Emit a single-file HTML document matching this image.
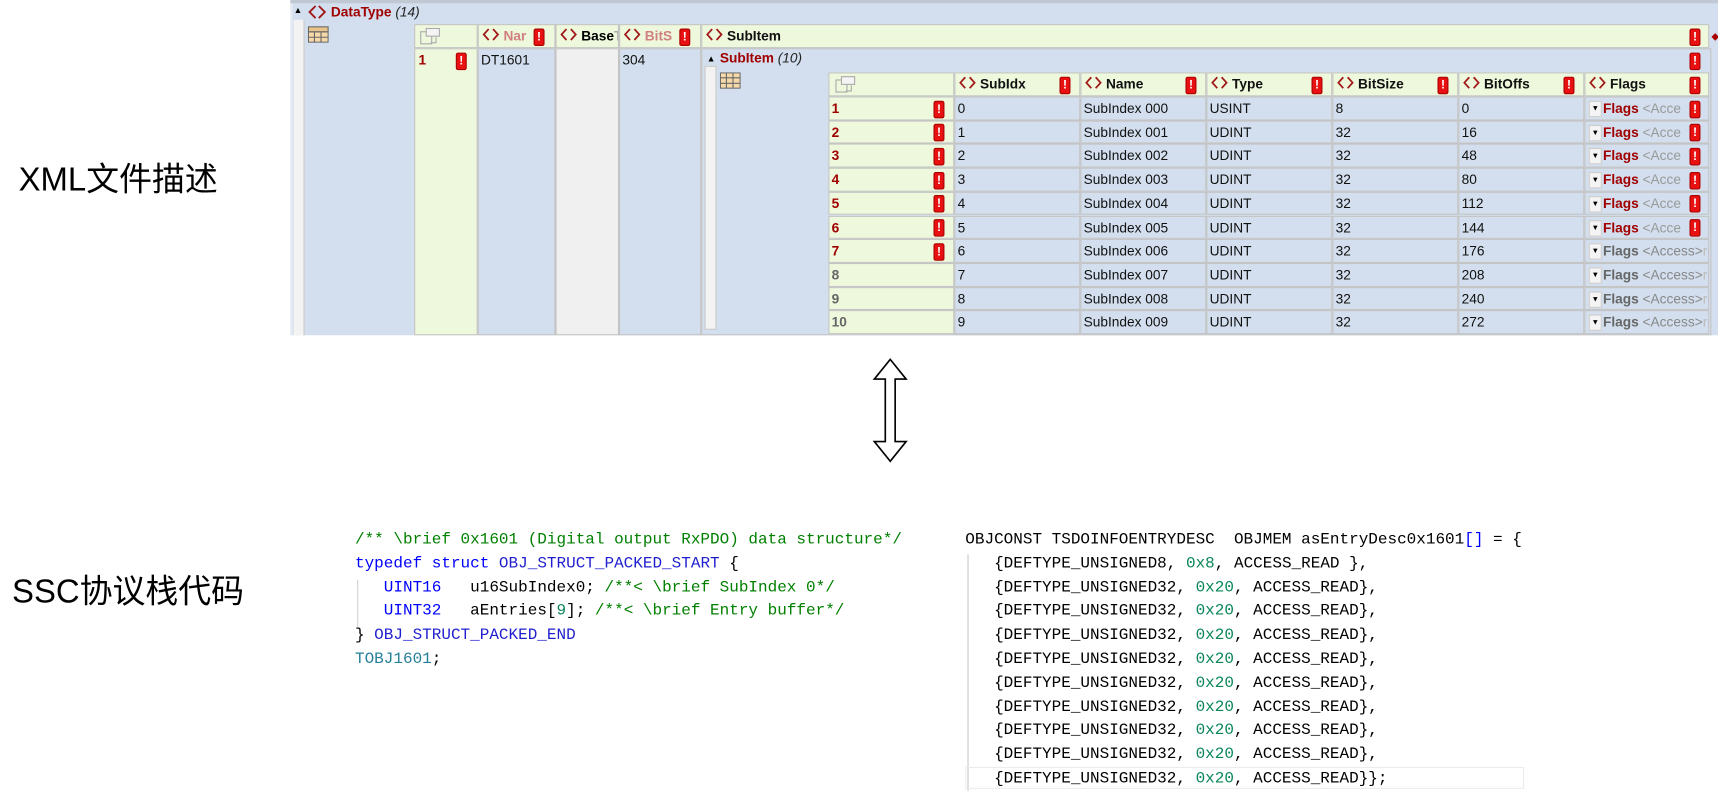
<!DOCTYPE html>
<html><head><meta charset="utf-8">
<style>
html,body{margin:0;padding:0;background:#fff;width:1718px;height:793px;overflow:hidden}
#w{position:absolute;left:0;top:0;width:1568px;height:724px;transform:scale(1.09566);transform-origin:0 0;font-family:"Liberation Sans",sans-serif}
.a{position:absolute}
.hdr{color:#a00000;font-weight:bold;font-size:12.5px}
.ex{display:inline-block;width:8px;height:14px;background:#e81010;border:1px solid #a00;border-radius:2px;color:#fff;font-weight:bold;font-size:11px;line-height:14px;text-align:center;position:absolute}
.cell{position:absolute;box-sizing:border-box;font-size:12.5px;line-height:21px;padding-left:2px;color:#111;white-space:nowrap;overflow:hidden}
.g{background:#eef8dc}.b{background:#d3dfee}.gr{background:#f0f0f0}
.lbl{font-size:30px;color:#000;font-family:"Liberation Sans","Noto Sans CJK SC",sans-serif}
.code{font-family:"Liberation Mono",monospace;font-size:14.6px;line-height:21.8px;white-space:pre;color:#000}
.cm{color:#008000}.kw{color:#0000ff}.ty{color:#267f99}.nu{color:#098658}.mc{color:#1f1fcf}
.dd{position:absolute;width:10px;height:13px;background:#f4f4f4;border:1px solid #ccc;font-size:7px;line-height:13px;text-align:center;color:#000}
.ch{vertical-align:-1px}
</style></head><body><div id="w">
<div class="a lbl" style="left:17px;top:139px">XML文件描述</div>
<div class="a lbl" style="left:11px;top:515px">SSC协议栈代码</div>

<div class="a" style="left:265px;top:0;width:1303px;height:306px;background:#d3dfee;border-left:2px solid #e6ebf2"></div>
<div class="a" style="left:265px;top:0;width:1303px;height:3px;background:#c0c8d4"></div>
<div class="a" style="left:268px;top:18px;width:9px;height:288px;background:#f3f3f3;border-right:1px solid #c8c8c8"></div>
<div class="a" style="left:268px;top:5px;font-size:8px">▲</div>
<svg class="a" style="left:281px;top:4px" width="17" height="14"><path d="M7 1.5L1.5 7L7 12.5M10 1.5L15.5 7L10 12.5" stroke="#a01818" stroke-width="1.7" fill="none"/></svg>
<div class="a hdr" style="left:302px;top:4px;font-size:12.5px">DataType <i style="font-weight:normal;color:#222">(14)</i></div>
<svg class="a" style="left:281px;top:24px" width="19" height="15"><rect x="0.5" y="0.5" width="18" height="14" fill="#f6d9a8" stroke="#666"/><path d="M0 5H19M0 10H19M6 0V15M12 0V15" stroke="#666"/><rect x="0.5" y="0.5" width="18" height="4.5" fill="#e8c48a" stroke="#666"/></svg>

<div class="cell g" style="left:378px;top:22px;width:58px;height:22px;border:1px solid #c4c4c4"></div>
<svg class="a" style="left:383px;top:25px" width="20" height="17"><rect x="1" y="4" width="10" height="11" fill="none" stroke="#aaa"/><rect x="6" y="1" width="12" height="7" fill="#f4f4f4" stroke="#aaa"/><path d="M15 9v5h-5" stroke="#aaa" fill="none"/></svg>
<div class="cell g hdr" style="left:436px;top:22px;width:71px;height:22px;border:1px solid #c4c4c4;padding-left:3px"><svg class="ch" width="16" height="13"><path d="M6 1.5L1.5 6.5L6 11.5M10 1.5L14.5 6.5L10 11.5" stroke="#a01818" stroke-width="1.6" fill="none"/></svg> <span style="color:#d08080">Nar</span><span class="ex" style="left:50px;top:3px">!</span></div>
<div class="cell g hdr" style="left:507px;top:22px;width:58px;height:22px;border:1px solid #c4c4c4;padding-left:3px;color:#000"><svg class="ch" width="16" height="13"><path d="M6 1.5L1.5 6.5L6 11.5M10 1.5L14.5 6.5L10 11.5" stroke="#a01818" stroke-width="1.6" fill="none"/></svg> Base<span style="color:#aaa">T</span></div>
<div class="cell g hdr" style="left:565px;top:22px;width:75px;height:22px;border:1px solid #c4c4c4;padding-left:3px"><svg class="ch" width="16" height="13"><path d="M6 1.5L1.5 6.5L6 11.5M10 1.5L14.5 6.5L10 11.5" stroke="#a01818" stroke-width="1.6" fill="none"/></svg> <span style="color:#d08080">BitS</span><span class="ex" style="left:54px;top:3px">!</span></div>
<div class="cell g hdr" style="left:640px;top:22px;width:920px;height:22px;border:1px solid #c4c4c4;padding-left:3px"><svg class="ch" width="16" height="13"><path d="M6 1.5L1.5 6.5L6 11.5M10 1.5L14.5 6.5L10 11.5" stroke="#a01818" stroke-width="1.6" fill="none"/></svg> SubItem<span class="ex" style="left:901px;top:3px">!</span></div>
<div class="a" style="left:1562px;top:28px;font-size:9px;color:#a00">◆</div>

<div class="cell g" style="left:378px;top:44px;width:58px;height:262px;border:1px solid #c4c4c4;color:#a00000;font-weight:bold;padding-left:3px">1<span class="ex" style="left:37px;top:3px">!</span></div>
<div class="cell b" style="left:436px;top:44px;width:71px;height:262px;border:1px solid #c4c4c4">DT1601</div>
<div class="cell gr" style="left:507px;top:44px;width:58px;height:262px;border:1px solid #c4c4c4"></div>
<div class="cell b" style="left:565px;top:44px;width:75px;height:262px;border:1px solid #c4c4c4">304</div>
<div class="cell b" style="left:640px;top:44px;width:922px;height:262px;border:1px solid #c4c4c4"></div>
<span class="ex" style="left:1542px;top:48px">!</span>
<div class="a" style="left:643px;top:60px;width:9px;height:239px;background:#f3f3f3;border:1px solid #c8c8c8"></div>
<div class="a" style="left:645px;top:49px;font-size:8px">▲</div>
<div class="a hdr" style="left:657px;top:46px">SubItem <i style="font-weight:normal;color:#222">(10)</i></div>
<svg class="a" style="left:657px;top:66px" width="19" height="15"><rect x="0.5" y="0.5" width="18" height="14" fill="#f6d9a8" stroke="#666"/><path d="M0 5H19M0 10H19M6 0V15M12 0V15" stroke="#666"/></svg>

<div class="cell g" style="left:756px;top:66px;width:115px;height:22px;border:1px solid #c4c4c4"></div>
<svg class="a" style="left:762px;top:69px" width="20" height="17"><rect x="1" y="4" width="10" height="11" fill="none" stroke="#aaa"/><rect x="6" y="1" width="12" height="7" fill="#f4f4f4" stroke="#aaa"/><path d="M15 9v5h-5" stroke="#aaa" fill="none"/></svg>
<div class="cell g hdr" style="left:871px;top:66px;width:115px;height:22px;border:1px solid #c4c4c4;padding-left:3px"><svg class="ch" width="16" height="13"><path d="M6 1.5L1.5 6.5L6 11.5M10 1.5L14.5 6.5L10 11.5" stroke="#a01818" stroke-width="1.6" fill="none"/></svg> SubIdx<span class="ex" style="left:95px;top:3px">!</span></div>
<div class="cell g hdr" style="left:986px;top:66px;width:115px;height:22px;border:1px solid #c4c4c4;padding-left:3px"><svg class="ch" width="16" height="13"><path d="M6 1.5L1.5 6.5L6 11.5M10 1.5L14.5 6.5L10 11.5" stroke="#a01818" stroke-width="1.6" fill="none"/></svg> Name<span class="ex" style="left:95px;top:3px">!</span></div>
<div class="cell g hdr" style="left:1101px;top:66px;width:115px;height:22px;border:1px solid #c4c4c4;padding-left:3px"><svg class="ch" width="16" height="13"><path d="M6 1.5L1.5 6.5L6 11.5M10 1.5L14.5 6.5L10 11.5" stroke="#a01818" stroke-width="1.6" fill="none"/></svg> Type<span class="ex" style="left:95px;top:3px">!</span></div>
<div class="cell g hdr" style="left:1216px;top:66px;width:115px;height:22px;border:1px solid #c4c4c4;padding-left:3px"><svg class="ch" width="16" height="13"><path d="M6 1.5L1.5 6.5L6 11.5M10 1.5L14.5 6.5L10 11.5" stroke="#a01818" stroke-width="1.6" fill="none"/></svg> BitSize<span class="ex" style="left:95px;top:3px">!</span></div>
<div class="cell g hdr" style="left:1331px;top:66px;width:115px;height:22px;border:1px solid #c4c4c4;padding-left:3px"><svg class="ch" width="16" height="13"><path d="M6 1.5L1.5 6.5L6 11.5M10 1.5L14.5 6.5L10 11.5" stroke="#a01818" stroke-width="1.6" fill="none"/></svg> BitOffs<span class="ex" style="left:95px;top:3px">!</span></div>
<div class="cell g hdr" style="left:1446px;top:66px;width:114px;height:22px;border:1px solid #c4c4c4;padding-left:3px"><svg class="ch" width="16" height="13"><path d="M6 1.5L1.5 6.5L6 11.5M10 1.5L14.5 6.5L10 11.5" stroke="#a01818" stroke-width="1.6" fill="none"/></svg> Flags<span class="ex" style="left:95px;top:3px">!</span></div>

<div class="cell g" style="left:756px;top:88px;width:115px;height:21.7px;border:1px solid #c4c4c4;font-weight:bold;color:#a00000">1<span class="ex" style="left:95px;top:2.5px">!</span></div><div class="cell b" style="left:871px;top:88px;width:115px;height:21.7px;border:1px solid #c4c4c4">0</div><div class="cell b" style="left:986px;top:88px;width:115px;height:21.7px;border:1px solid #c4c4c4">SubIndex 000</div><div class="cell b" style="left:1101px;top:88px;width:115px;height:21.7px;border:1px solid #c4c4c4">USINT</div><div class="cell b" style="left:1216px;top:88px;width:115px;height:21.7px;border:1px solid #c4c4c4">8</div><div class="cell b" style="left:1331px;top:88px;width:115px;height:21.7px;border:1px solid #c4c4c4">0</div><div class="cell b" style="left:1446px;top:88px;width:114px;height:21.7px;border:1px solid #c4c4c4;padding-left:16px"><span class="dd" style="left:3px;top:3px">▼</span><b style="color:#a00000">Flags</b> <span style="color:#999">&lt;Acce</span><span class="ex" style="left:95px;top:2.5px">!</span></div>

<div class="cell g" style="left:756px;top:109.7px;width:115px;height:21.7px;border:1px solid #c4c4c4;font-weight:bold;color:#a00000">2<span class="ex" style="left:95px;top:2.5px">!</span></div><div class="cell b" style="left:871px;top:109.7px;width:115px;height:21.7px;border:1px solid #c4c4c4">1</div><div class="cell b" style="left:986px;top:109.7px;width:115px;height:21.7px;border:1px solid #c4c4c4">SubIndex 001</div><div class="cell b" style="left:1101px;top:109.7px;width:115px;height:21.7px;border:1px solid #c4c4c4">UDINT</div><div class="cell b" style="left:1216px;top:109.7px;width:115px;height:21.7px;border:1px solid #c4c4c4">32</div><div class="cell b" style="left:1331px;top:109.7px;width:115px;height:21.7px;border:1px solid #c4c4c4">16</div><div class="cell b" style="left:1446px;top:109.7px;width:114px;height:21.7px;border:1px solid #c4c4c4;padding-left:16px"><span class="dd" style="left:3px;top:3px">▼</span><b style="color:#a00000">Flags</b> <span style="color:#999">&lt;Acce</span><span class="ex" style="left:95px;top:2.5px">!</span></div>

<div class="cell g" style="left:756px;top:131.4px;width:115px;height:21.7px;border:1px solid #c4c4c4;font-weight:bold;color:#a00000">3<span class="ex" style="left:95px;top:2.5px">!</span></div><div class="cell b" style="left:871px;top:131.4px;width:115px;height:21.7px;border:1px solid #c4c4c4">2</div><div class="cell b" style="left:986px;top:131.4px;width:115px;height:21.7px;border:1px solid #c4c4c4">SubIndex 002</div><div class="cell b" style="left:1101px;top:131.4px;width:115px;height:21.7px;border:1px solid #c4c4c4">UDINT</div><div class="cell b" style="left:1216px;top:131.4px;width:115px;height:21.7px;border:1px solid #c4c4c4">32</div><div class="cell b" style="left:1331px;top:131.4px;width:115px;height:21.7px;border:1px solid #c4c4c4">48</div><div class="cell b" style="left:1446px;top:131.4px;width:114px;height:21.7px;border:1px solid #c4c4c4;padding-left:16px"><span class="dd" style="left:3px;top:3px">▼</span><b style="color:#a00000">Flags</b> <span style="color:#999">&lt;Acce</span><span class="ex" style="left:95px;top:2.5px">!</span></div>

<div class="cell g" style="left:756px;top:153.1px;width:115px;height:21.7px;border:1px solid #c4c4c4;font-weight:bold;color:#a00000">4<span class="ex" style="left:95px;top:2.5px">!</span></div><div class="cell b" style="left:871px;top:153.1px;width:115px;height:21.7px;border:1px solid #c4c4c4">3</div><div class="cell b" style="left:986px;top:153.1px;width:115px;height:21.7px;border:1px solid #c4c4c4">SubIndex 003</div><div class="cell b" style="left:1101px;top:153.1px;width:115px;height:21.7px;border:1px solid #c4c4c4">UDINT</div><div class="cell b" style="left:1216px;top:153.1px;width:115px;height:21.7px;border:1px solid #c4c4c4">32</div><div class="cell b" style="left:1331px;top:153.1px;width:115px;height:21.7px;border:1px solid #c4c4c4">80</div><div class="cell b" style="left:1446px;top:153.1px;width:114px;height:21.7px;border:1px solid #c4c4c4;padding-left:16px"><span class="dd" style="left:3px;top:3px">▼</span><b style="color:#a00000">Flags</b> <span style="color:#999">&lt;Acce</span><span class="ex" style="left:95px;top:2.5px">!</span></div>

<div class="cell g" style="left:756px;top:174.8px;width:115px;height:21.7px;border:1px solid #c4c4c4;font-weight:bold;color:#a00000">5<span class="ex" style="left:95px;top:2.5px">!</span></div><div class="cell b" style="left:871px;top:174.8px;width:115px;height:21.7px;border:1px solid #c4c4c4">4</div><div class="cell b" style="left:986px;top:174.8px;width:115px;height:21.7px;border:1px solid #c4c4c4">SubIndex 004</div><div class="cell b" style="left:1101px;top:174.8px;width:115px;height:21.7px;border:1px solid #c4c4c4">UDINT</div><div class="cell b" style="left:1216px;top:174.8px;width:115px;height:21.7px;border:1px solid #c4c4c4">32</div><div class="cell b" style="left:1331px;top:174.8px;width:115px;height:21.7px;border:1px solid #c4c4c4">112</div><div class="cell b" style="left:1446px;top:174.8px;width:114px;height:21.7px;border:1px solid #c4c4c4;padding-left:16px"><span class="dd" style="left:3px;top:3px">▼</span><b style="color:#a00000">Flags</b> <span style="color:#999">&lt;Acce</span><span class="ex" style="left:95px;top:2.5px">!</span></div>

<div class="cell g" style="left:756px;top:196.5px;width:115px;height:21.7px;border:1px solid #c4c4c4;font-weight:bold;color:#a00000">6<span class="ex" style="left:95px;top:2.5px">!</span></div><div class="cell b" style="left:871px;top:196.5px;width:115px;height:21.7px;border:1px solid #c4c4c4">5</div><div class="cell b" style="left:986px;top:196.5px;width:115px;height:21.7px;border:1px solid #c4c4c4">SubIndex 005</div><div class="cell b" style="left:1101px;top:196.5px;width:115px;height:21.7px;border:1px solid #c4c4c4">UDINT</div><div class="cell b" style="left:1216px;top:196.5px;width:115px;height:21.7px;border:1px solid #c4c4c4">32</div><div class="cell b" style="left:1331px;top:196.5px;width:115px;height:21.7px;border:1px solid #c4c4c4">144</div><div class="cell b" style="left:1446px;top:196.5px;width:114px;height:21.7px;border:1px solid #c4c4c4;padding-left:16px"><span class="dd" style="left:3px;top:3px">▼</span><b style="color:#a00000">Flags</b> <span style="color:#999">&lt;Acce</span><span class="ex" style="left:95px;top:2.5px">!</span></div>

<div class="cell g" style="left:756px;top:218.2px;width:115px;height:21.7px;border:1px solid #c4c4c4;font-weight:bold;color:#a00000">7<span class="ex" style="left:95px;top:2.5px">!</span></div><div class="cell b" style="left:871px;top:218.2px;width:115px;height:21.7px;border:1px solid #c4c4c4">6</div><div class="cell b" style="left:986px;top:218.2px;width:115px;height:21.7px;border:1px solid #c4c4c4">SubIndex 006</div><div class="cell b" style="left:1101px;top:218.2px;width:115px;height:21.7px;border:1px solid #c4c4c4">UDINT</div><div class="cell b" style="left:1216px;top:218.2px;width:115px;height:21.7px;border:1px solid #c4c4c4">32</div><div class="cell b" style="left:1331px;top:218.2px;width:115px;height:21.7px;border:1px solid #c4c4c4">176</div><div class="cell b" style="left:1446px;top:218.2px;width:114px;height:21.7px;border:1px solid #c4c4c4;padding-left:16px"><span class="dd" style="left:3px;top:3px">▼</span><b style="color:#666">Flags</b> <span style="color:#888">&lt;Access&gt;</span><span style="color:#bbb">ro</span></div>

<div class="cell g" style="left:756px;top:239.9px;width:115px;height:21.7px;border:1px solid #c4c4c4;font-weight:bold;color:#666">8</div><div class="cell b" style="left:871px;top:239.9px;width:115px;height:21.7px;border:1px solid #c4c4c4">7</div><div class="cell b" style="left:986px;top:239.9px;width:115px;height:21.7px;border:1px solid #c4c4c4">SubIndex 007</div><div class="cell b" style="left:1101px;top:239.9px;width:115px;height:21.7px;border:1px solid #c4c4c4">UDINT</div><div class="cell b" style="left:1216px;top:239.9px;width:115px;height:21.7px;border:1px solid #c4c4c4">32</div><div class="cell b" style="left:1331px;top:239.9px;width:115px;height:21.7px;border:1px solid #c4c4c4">208</div><div class="cell b" style="left:1446px;top:239.9px;width:114px;height:21.7px;border:1px solid #c4c4c4;padding-left:16px"><span class="dd" style="left:3px;top:3px">▼</span><b style="color:#666">Flags</b> <span style="color:#888">&lt;Access&gt;</span><span style="color:#bbb">ro</span></div>

<div class="cell g" style="left:756px;top:261.6px;width:115px;height:21.7px;border:1px solid #c4c4c4;font-weight:bold;color:#666">9</div><div class="cell b" style="left:871px;top:261.6px;width:115px;height:21.7px;border:1px solid #c4c4c4">8</div><div class="cell b" style="left:986px;top:261.6px;width:115px;height:21.7px;border:1px solid #c4c4c4">SubIndex 008</div><div class="cell b" style="left:1101px;top:261.6px;width:115px;height:21.7px;border:1px solid #c4c4c4">UDINT</div><div class="cell b" style="left:1216px;top:261.6px;width:115px;height:21.7px;border:1px solid #c4c4c4">32</div><div class="cell b" style="left:1331px;top:261.6px;width:115px;height:21.7px;border:1px solid #c4c4c4">240</div><div class="cell b" style="left:1446px;top:261.6px;width:114px;height:21.7px;border:1px solid #c4c4c4;padding-left:16px"><span class="dd" style="left:3px;top:3px">▼</span><b style="color:#666">Flags</b> <span style="color:#888">&lt;Access&gt;</span><span style="color:#bbb">ro</span></div>

<div class="cell g" style="left:756px;top:283.3px;width:115px;height:21.7px;border:1px solid #c4c4c4;font-weight:bold;color:#666">10</div><div class="cell b" style="left:871px;top:283.3px;width:115px;height:21.7px;border:1px solid #c4c4c4">9</div><div class="cell b" style="left:986px;top:283.3px;width:115px;height:21.7px;border:1px solid #c4c4c4">SubIndex 009</div><div class="cell b" style="left:1101px;top:283.3px;width:115px;height:21.7px;border:1px solid #c4c4c4">UDINT</div><div class="cell b" style="left:1216px;top:283.3px;width:115px;height:21.7px;border:1px solid #c4c4c4">32</div><div class="cell b" style="left:1331px;top:283.3px;width:115px;height:21.7px;border:1px solid #c4c4c4">272</div><div class="cell b" style="left:1446px;top:283.3px;width:114px;height:21.7px;border:1px solid #c4c4c4;padding-left:16px"><span class="dd" style="left:3px;top:3px">▼</span><b style="color:#666">Flags</b> <span style="color:#888">&lt;Access&gt;</span><span style="color:#bbb">ro</span></div>

<svg class="a" style="left:795px;top:326px" width="36" height="97"><path d="M17.5 2L32 20H22V77H32L17.5 95L3 77H13V20H3Z" fill="#fff" stroke="#000" stroke-width="1.5"/></svg>

<div class="a" style="left:326px;top:529px;width:1px;height:43px;background:#d0d0d0"></div>
<div class="a code" style="left:324px;top:483px"><span class="cm">/** \brief 0x1601 (Digital output RxPDO) data structure*/</span>
<span class="kw">typedef struct</span> <span class="mc">OBJ_STRUCT_PACKED_START</span> {
   <span class="kw">UINT16</span>   u16SubIndex0; <span class="cm">/**&lt; \brief SubIndex 0*/</span>
   <span class="kw">UINT32</span>   aEntries[<span class="nu">9</span>]; <span class="cm">/**&lt; \brief Entry buffer*/</span>
} <span class="mc">OBJ_STRUCT_PACKED_END</span>
<span class="ty">TOBJ1601</span>;</div>

<div class="a" style="left:883px;top:506px;width:1px;height:216px;background:#c8c8c8"></div>
<div class="a" style="left:881px;top:700px;width:510px;height:20px;border:1px solid #ececec;box-sizing:border-box"></div>
<div class="a code" style="left:881px;top:483px">OBJCONST TSDOINFOENTRYDESC  OBJMEM asEntryDesc0x1601<span class="kw">[]</span> = {
   {DEFTYPE_UNSIGNED8, <span class="nu">0x8</span>, ACCESS_READ },
   {DEFTYPE_UNSIGNED32, <span class="nu">0x20</span>, ACCESS_READ},
   {DEFTYPE_UNSIGNED32, <span class="nu">0x20</span>, ACCESS_READ},
   {DEFTYPE_UNSIGNED32, <span class="nu">0x20</span>, ACCESS_READ},
   {DEFTYPE_UNSIGNED32, <span class="nu">0x20</span>, ACCESS_READ},
   {DEFTYPE_UNSIGNED32, <span class="nu">0x20</span>, ACCESS_READ},
   {DEFTYPE_UNSIGNED32, <span class="nu">0x20</span>, ACCESS_READ},
   {DEFTYPE_UNSIGNED32, <span class="nu">0x20</span>, ACCESS_READ},
   {DEFTYPE_UNSIGNED32, <span class="nu">0x20</span>, ACCESS_READ},
   {DEFTYPE_UNSIGNED32, <span class="nu">0x20</span>, ACCESS_READ}};</div>
</div></body></html>
